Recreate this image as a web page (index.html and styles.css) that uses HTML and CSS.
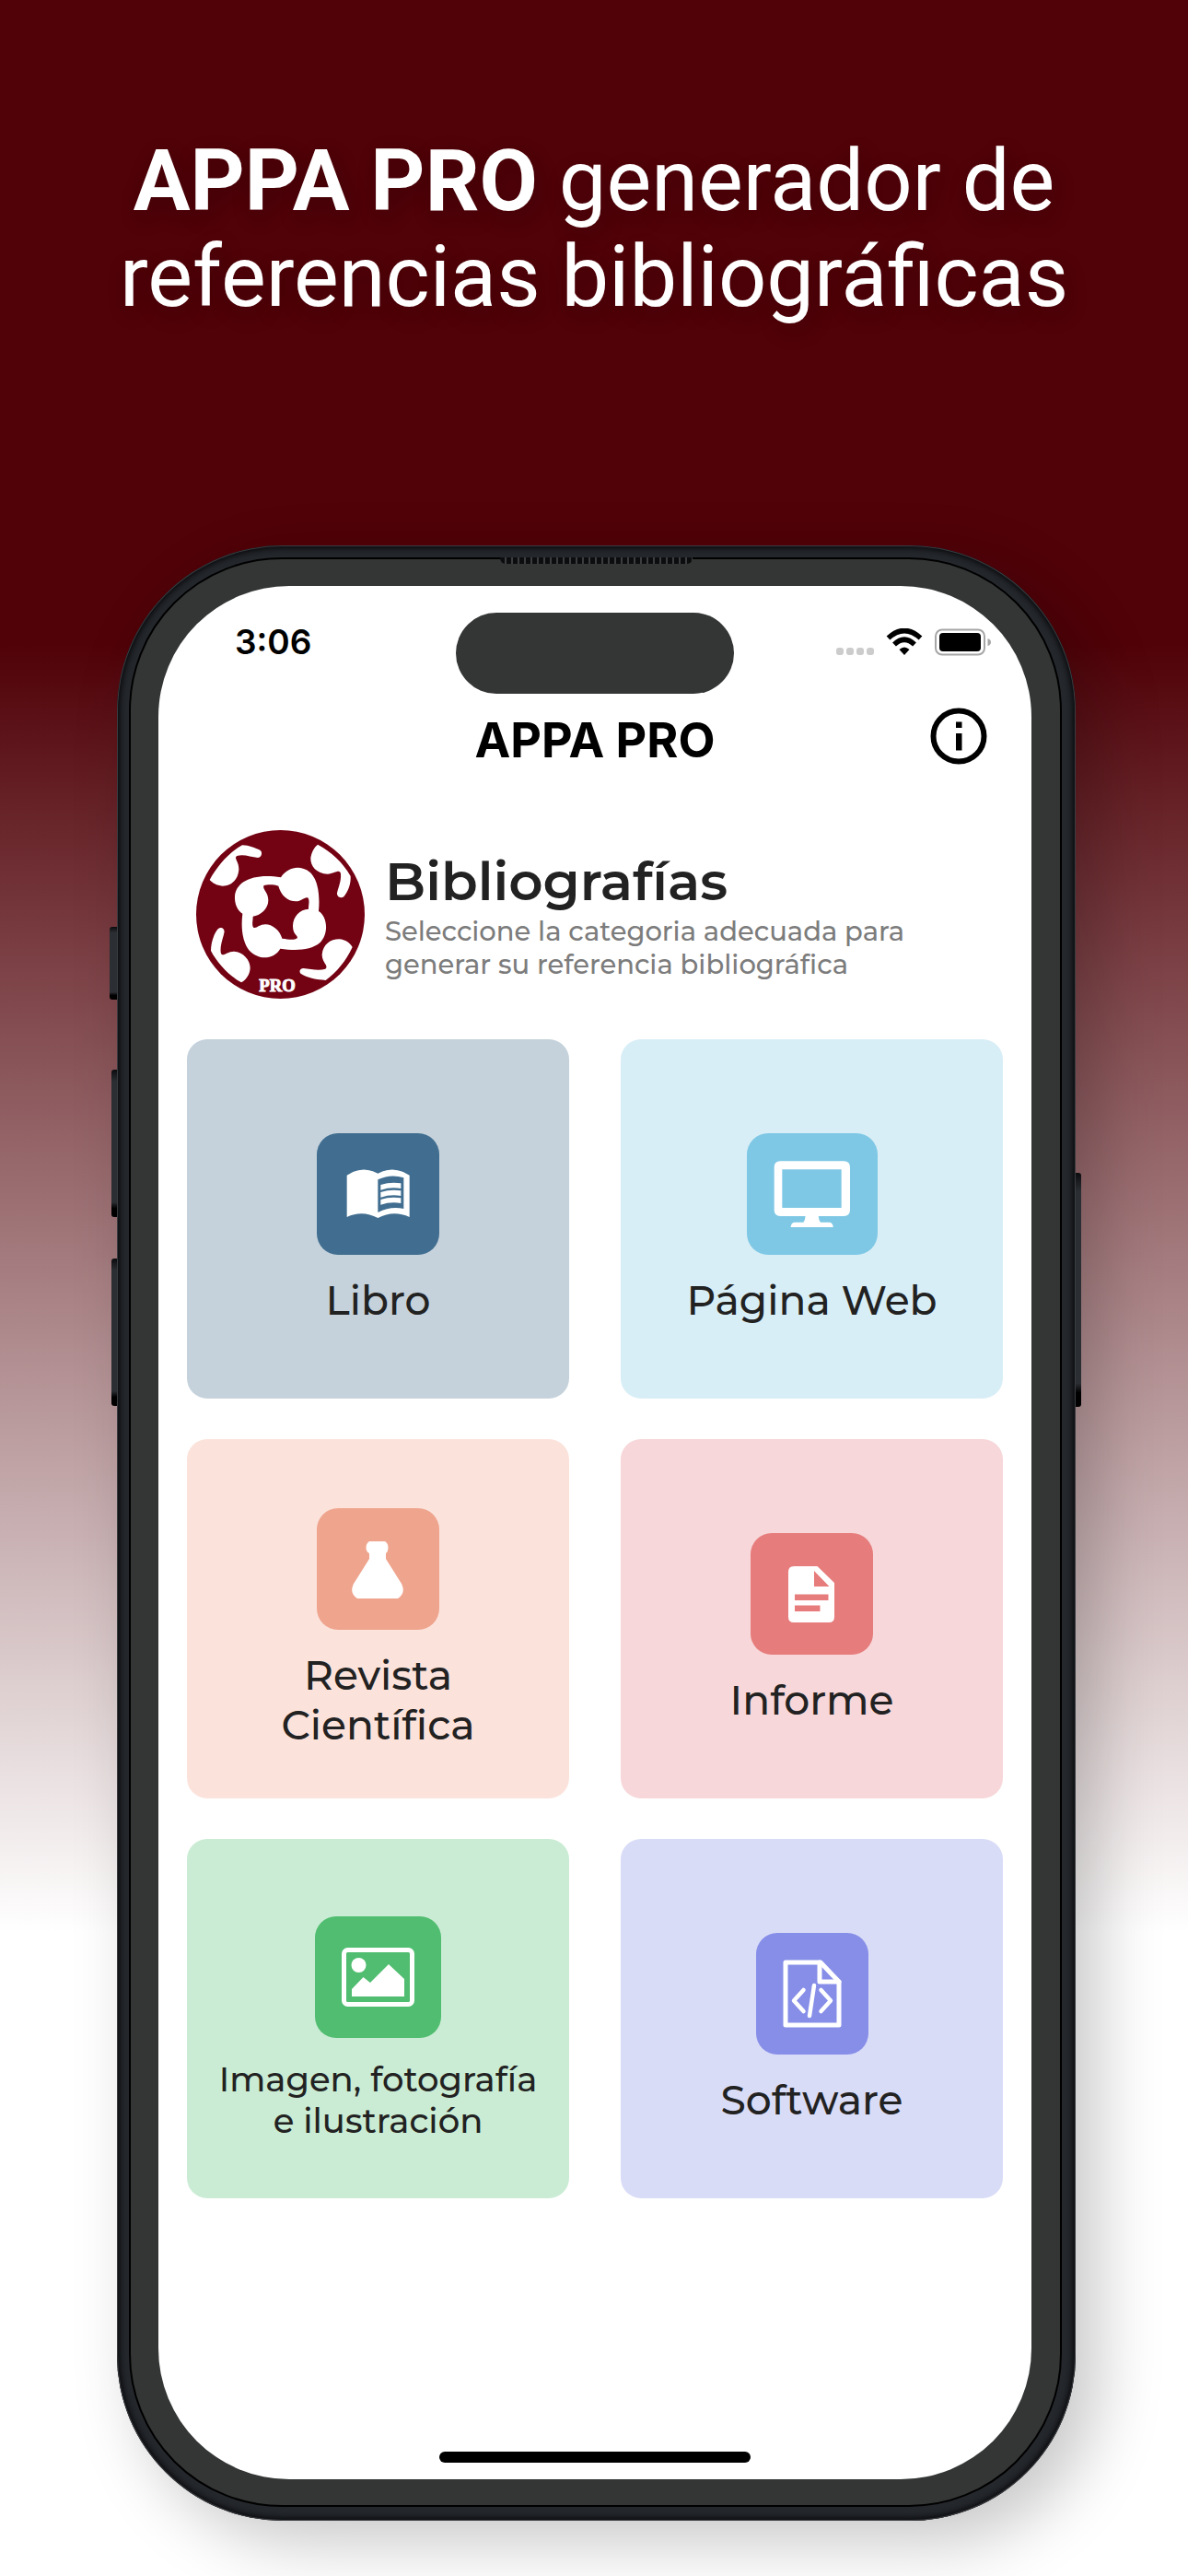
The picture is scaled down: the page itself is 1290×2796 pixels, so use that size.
FILE: index.html
```html
<!DOCTYPE html>
<html lang="es">
<head>
<meta charset="utf-8">
<meta name="viewport" content="width=device-width, initial-scale=1">
<title>APPA PRO</title>
<link rel="stylesheet" href="styles.css">
</head>
<body>
<header class="hero">
  <p class="hero-title"><strong>APPA PRO</strong> generador de<br>referencias bibliográficas</p>
</header>
<div class="phone">
  <span class="side-key key-action"></span>
  <span class="side-key key-up"></span>
  <span class="side-key key-down"></span>
  <span class="side-key key-power"></span>
  <span class="speaker"></span>
  <div class="bezel">
    <main class="screen">
      <div class="status-bar">
        <span class="time">3:06</span>
        <span class="island"></span>
        <span class="indicators">
          <span class="dots"><i></i><i></i><i></i><i></i></span>
          <svg class="wifi" viewBox="0 0 40 30" aria-hidden="true">
            <path d="M2.500 10.500Q20-5.500 37.500 10.500" fill="none" stroke="#000" stroke-width="5.500"/>
            <path d="M9 17.500Q20 7 31 17.500" fill="none" stroke="#000" stroke-width="5.500"/>
            <path d="M14.500 23Q20 18 25.500 23L20 29Z"/>
          </svg>
          <svg class="battery" viewBox="0 0 62 30" aria-hidden="true">
            <rect x="1" y="1.500" width="53" height="27" rx="7" fill="none" stroke="#a6a6a6" stroke-width="2"/>
            <rect x="5" y="5" width="45" height="20" rx="4"/>
            <path d="M57.500 11Q61 12 61 15T57.500 19Z" fill="#a6a6a6"/>
          </svg>
        </span>
      </div>
      <header class="app-bar">
        <h1 class="app-title">APPA PRO</h1>
        <button class="info" type="button" aria-label="Información">
          <svg viewBox="0 0 62 62" aria-hidden="true">
            <circle cx="31" cy="31" r="27.500" fill="none" stroke="#000" stroke-width="6"/>
            <path d="M28 15.500h6.500v6.500H28zM28 28h6.500v18.500H28z"/>
          </svg>
        </button>
      </header>
      <section class="intro">
        <svg class="logo" viewBox="42 33 549 549" aria-label="APPA PRO">
          <circle cx="316.500" cy="307.500" r="274.500" fill="#730213"/>
          <g fill="#fff">
            <path d="M168 250C170 200 230 172 318 187C335 160 365 150 390 158C430 168 448 220 441 297C470 315 475 370 445 400C415 425 365 427 316 419C300 448 262 455 235 440C200 425 185 370 193 305C175 295 167 270 168 250Z"/>
            <path d="M86 195C110 150 150 105 192 82C215 82 235 92 250 98C260 105 255 122 243 123C220 120 195 110 175 117C163 125 182 135 181 163C178 200 150 215 128 215C108 213 95 205 86 195Z"/>
            <path d="M438 80C480 102 522 140 545 183C547 210 535 235 523 250C512 257 500 250 501 238C505 220 515 200 513 175C508 158 495 175 470 176C435 175 413 150 415 122C418 105 425 90 438 80Z"/>
            <path d="M189 529C150 508 110 465 90 426C90 400 100 370 113 355C125 345 137 355 133 368C128 390 118 415 123 435C130 447 142 428 165 428C195 430 218 455 218 482C217 503 205 520 189 529Z"/>
            <path d="M551 414C530 460 500 495 464 522C435 520 405 515 385 502C375 495 380 482 392 483C415 485 440 492 463 485C475 475 452 465 452 438C455 405 480 388 508 388C528 390 543 400 551 414Z"/>
          </g>
          <path fill="#730213" d="M262 214C275 209 295 210 310 215C318 245 340 265 367 265C385 265 395 250 405 253C413 260 408 275 408 290C380 290 357 315 357 345C357 375 375 375 371 385C360 393 340 388 322 386C315 360 290 340 268 340C248 340 240 353 230 351C222 345 227 330 227 314C250 312 277 290 277 262C277 235 258 228 262 214Z"/>
          <text class="logo-text" x="306" y="558" text-anchor="middle">PRO</text>
        </svg>
        <div class="intro-copy">
          <h2 class="intro-title">Bibliografías</h2>
          <p class="intro-text">Seleccione la categoria adecuada para<br>generar su referencia bibliográfica</p>
        </div>
      </section>
      <section class="cards">
        <button class="card card-book" type="button">
          <span class="tile">
            <svg width="75" height="54" viewBox="551 456 225 162" fill="#fff" aria-hidden="true">
              <path d="M562 476Q612 442 663 470Q714 442 766 476V612Q714 588 663 615Q612 588 562 612Z"/>
              <path d="M663 490Q705 470 747 484V585Q705 575 663 597Z" fill="#416e90"/>
              <path d="M672 507Q705 496 738 502V519Q705 513 672 524ZM672 531Q705 520 738 526V543Q705 537 672 548ZM672 555Q705 544 738 550V567Q705 561 672 572Z"/>
            </svg>
          </span>
          <span class="label">Libro</span>
        </button>
        <button class="card card-web" type="button">
          <span class="tile">
            <svg width="84" height="72" viewBox="539 423 252 216" fill="#fff" aria-hidden="true">
              <path fill-rule="evenodd" d="M561 424H768Q788 424 788 444V583Q788 603 768 603H561Q541 603 541 583V444Q541 424 561 424ZM567 451V576H760V451Z"/>
              <path d="M643 600Q642 616 636 623H607Q595 625 595 639H733Q733 625 721 623H692Q686 616 685 600Z"/>
            </svg>
          </span>
          <span class="label">Página Web</span>
        </button>
        <button class="card card-journal" type="button">
          <span class="tile">
            <svg width="75" height="75" viewBox="-1 -1 75 75" fill="#fff" aria-hidden="true">
              <path d="M27 6H44Q47.500 8 47.500 13Q47.500 17 45 19V25L62 52Q67 62 58 68H14Q5 62 10 52L27 25V19Q23.500 17 23.500 13Q23.500 8 27 6Z"/>
            </svg>
          </span>
          <span class="label">Revista<br>Científica</span>
        </button>
        <button class="card card-report" type="button">
          <span class="tile">
            <svg width="75" height="75" viewBox="-1 -1 75 75" fill="#fff" aria-hidden="true">
              <path fill-rule="evenodd" d="M17 6H42.500L61 24V61Q61 67 55 67H17Q11 67 11 61V12Q11 6 17 6ZM39 11V28H55.500ZM18 36.500V43H54.500V36.500ZM18 48.500V55H45.500V48.500Z"/>
            </svg>
          </span>
          <span class="label">Informe</span>
        </button>
        <button class="card card-image" type="button">
          <span class="tile">
            <svg width="79" height="64" viewBox="0 0 79 64" fill="#fff" aria-hidden="true">
              <rect x="2.500" y="2.500" width="74" height="59" rx="4" fill="none" stroke="#fff" stroke-width="5"/>
              <circle cx="18.500" cy="19" r="8"/>
              <path d="M11 53V45L23.500 32L31 38L51 18L68 34V53Z"/>
            </svg>
          </span>
          <span class="label label-small">Imagen, fotografía<br>e ilustración</span>
        </button>
        <button class="card card-code" type="button">
          <span class="tile">
            <svg width="64" height="74" viewBox="0 0 64 74" fill="none" stroke="#fff" stroke-linejoin="round" stroke-linecap="round" aria-hidden="true">
              <path d="M3 3H41L61 24V71H3Z" stroke-width="5"/>
              <path d="M40 3V24H61" stroke-width="5"/>
              <path d="M22.500 33L12 44.500L22.500 56M41.500 33L52 44.500L41.500 56M34 28L29 61" stroke-width="4.500"/>
            </svg>
          </span>
          <span class="label">Software</span>
        </button>
      </section>
      <span class="home-bar"></span>
    </main>
  </div>
</div>
</body>
</html>
```
FILE: styles.css
```css
* {
  box-sizing: border-box;
}

body {
  margin: 0;
  min-height: 100vh;
  padding-bottom: 60px;
  display: flex;
  flex-direction: column;
  font-family: Montserrat, Inter, sans-serif;
  color: #222;
  background: linear-gradient(#500208 25%, #fff 75%);
}

h1,
h2,
p {
  margin: 0;
}

button {
  border: 0;
  padding: 0;
  background: none;
  color: inherit;
  font: inherit;
  cursor: pointer;
}

svg {
  display: block;
}

.hero {
  padding: 145px 32px 239px;
  text-align: center;
}

.hero-title {
  font-family: Roboto, sans-serif;
  font-size: 92px;
  line-height: 104px;
  color: #fff;
  text-shadow: 4px 8px 24px rgba(0, 0, 0, 0.2);
}

/* device */
.phone {
  position: relative;
  flex: 1;
  display: flex;
  margin: 0 122px 0 127px;
  padding: 13px 15px 15px 13px;
  border-radius: 180px;
  background: #24272c;
  box-shadow:
    inset 0 0 0 1px #3a3c40,
    inset 0 0 6px 3px #08090b,
    24px 24px 70px rgba(0, 0, 0, 0.22);
}

.bezel {
  flex: 1;
  display: flex;
  padding: 29px 31px 28px 30px;
  border: 2px solid #000;
  border-radius: 166px;
  background: #343535;
}

.screen {
  flex: 1;
  display: flex;
  flex-direction: column;
  padding: 29px 31px 18px;
  border-radius: 142px;
  background: #fff;
}

.side-key {
  position: absolute;
  left: -6px;
  width: 6px;
  height: 160px;
  border-radius: 3px 0 0 3px;
  background: linear-gradient(#0b0c0e, #2b2e32 8%, #2b2e32 90%, #000 94%);
}

.key-action {
  top: 414px;
  left: -8px;
  width: 8px;
  height: 79px;
}

.key-up {
  top: 569px;
}

.key-down {
  top: 774px;
}

.key-power {
  top: 681px;
  left: 100%;
  height: 254px;
  border-radius: 0 3px 3px 0;
}

.speaker {
  position: absolute;
  top: 13px;
  left: 40%;
  width: 20%;
  height: 7px;
  border-radius: 0 0 6px 6px;
  background: repeating-linear-gradient(90deg, #0c0d0e 0 5px, #3c3d3e 5px 7px);
}

/* status bar */
.status-bar {
  display: grid;
  grid-template-columns: 1fr 302px 1fr;
  align-items: start;
}

.time {
  padding-left: 52px;
  font-family: Inter, sans-serif;
  font-size: 37px;
  font-weight: 600;
  line-height: 64px;
  color: #000;
}

.island {
  height: 88px;
  border-radius: 44px;
  background: #343535;
}

.indicators {
  display: flex;
  justify-content: flex-end;
  align-items: center;
  gap: 13px;
  height: 64px;
  padding-right: 12px;
}

.dots {
  display: flex;
  gap: 3px;
  padding-top: 20px;
}

.dots i {
  width: 8px;
  height: 8px;
  border-radius: 3px;
  background: #ccc;
}

.wifi {
  width: 40px;
  height: 30px;
}

.battery {
  width: 62px;
  height: 30px;
}

/* app bar */
.app-bar {
  display: grid;
  grid-template-columns: 1fr auto 1fr;
  align-items: center;
  height: 92px;
}

.app-title {
  grid-column: 2;
  padding-top: 10px;
  font-family: Inter, sans-serif;
  font-size: 52px;
  font-weight: 700;
  line-height: 64px;
  color: #000;
}

.info {
  justify-self: end;
  margin-right: 17px;
}

.info svg {
  width: 62px;
  height: 62px;
}

/* intro */
.intro {
  display: flex;
  align-items: center;
  gap: 22px;
  margin: 56px 0 44px;
  padding-left: 10px;
}

.logo {
  flex: none;
  width: 183px;
  height: 183px;
}

.logo-text {
  font-family: "Liberation Serif", serif;
  font-size: 56px;
  font-weight: 700;
  fill: #fff;
  stroke: #fff;
  stroke-width: 3px;
}

.intro-copy {
  padding-top: 4px;
}

.intro-title {
  font-size: 58px;
  font-weight: 600;
  line-height: 64px;
}

.intro-text {
  padding-top: 4px;
  font-size: 29px;
  font-weight: 500;
  line-height: 36px;
  color: #7c7c7c;
}

/* categories */
.cards {
  display: grid;
  grid-template-columns: 1fr 1fr;
  grid-auto-rows: minmax(390px, auto);
  gap: 44px 56px;
  margin-bottom: 44px;
}

.card {
  display: flex;
  flex-direction: column;
  align-items: center;
  justify-content: center;
  gap: 22px;
  padding-top: 22px;
  border-radius: 22px;
}

.tile {
  display: flex;
  align-items: center;
  height: 132px;
  padding: 0 29px;
  border-radius: 23px;
}

.label {
  font-size: 44px;
  font-weight: 500;
  line-height: 54px;
}

.label-small {
  font-size: 37px;
  line-height: 45px;
}

.card-book { background: #c5d2db; }
.card-book .tile { background: #416e90; }
.card-web { background: #d8eef6; }
.card-web .tile { background: #7fc8e5; }
.card-journal { background: #fbe3dc; }
.card-journal .tile { background: #efa48d; }
.card-report { background: #f7d7d9; }
.card-report .tile { background: #e77c7c; }
.card-image { background: #caecd4; }
.card-image .tile { background: #50bd70; }
.card-code { background: #d9dcf7; }
.card-code .tile { background: #868ee8; }

.home-bar {
  align-self: center;
  width: 338px;
  height: 12px;
  margin-top: auto;
  border-radius: 6px;
  background: #000;
}
```
